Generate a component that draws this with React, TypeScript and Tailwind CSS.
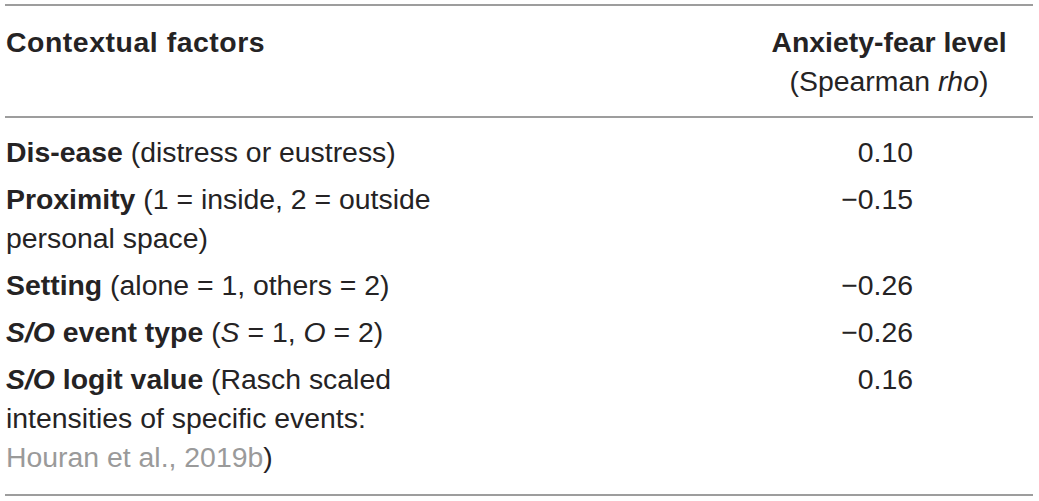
type Row = { label: React.ReactNode; value: string };

const cite = "text-[#9a9a9a]";

const rows: Row[] = [
  {
    label: (
      <>
        <b>Dis-ease</b> (distress or eustress)
      </>
    ),
    value: "0.10",
  },
  {
    label: (
      <>
        <b>Proximity</b> (1 = inside, 2 = outside personal space)
      </>
    ),
    value: "\u22120.15",
  },
  {
    label: (
      <>
        <b>Setting</b> (alone = 1, others = 2)
      </>
    ),
    value: "\u22120.26",
  },
  {
    label: (
      <>
        <b>
          <i>S/O</i> event type
        </b>{" "}
        (<i>S</i> = 1, <i>O</i> = 2)
      </>
    ),
    value: "\u22120.26",
  },
  {
    label: (
      <>
        <b>
          <i>S/O</i> logit value
        </b>{" "}
        (Rasch scaled intensities of specific events: <span className={cite}>Houran et al., 2019b</span>)
      </>
    ),
    value: "0.16",
  },
];

export default function App() {
  return (
    <div className="w-[1039px] h-[501px] bg-white pt-[4px] pl-[5px] font-['Liberation_Sans',Arial,sans-serif] text-[28.4px] leading-[39px] text-[#252324]">
      <table className="w-[1028px] border-collapse">
        <thead>
          <tr className="border-t-2 border-b-2 border-[#9d9d9d]">
            <th className="w-[450px] text-left align-top pl-[1px] pt-[17px] pb-[15px] font-bold tracking-[0.55px]">Contextual factors</th>
            <th className="align-top pt-[17px] pb-[15px] font-normal">
              <div className="w-[240px] ml-[314px] text-center">
                <div className="font-bold">Anxiety-fear level</div>
                <div>
                  (Spearman <i>rho</i>)
                </div>
              </div>
            </th>
          </tr>
        </thead>
        <tbody className="border-b-2 border-[#9d9d9d]">
          {rows.map((r, i) => {
            const pad = i === 0 ? "pt-[15px] pb-[4px]" : i === rows.length - 1 ? "pt-[4px] pb-[17px]" : "py-[4px]";
            return (
              <tr key={i}>
                <td className={`align-top pl-[1px] ${pad}`}>{r.label}</td>
                <td className={`align-top ${pad}`}>
                  <div className="w-[240px] ml-[314px] text-right pr-[96px]">{r.value}</div>
                </td>
              </tr>
            );
          })}
        </tbody>
      </table>
    </div>
  );
}
